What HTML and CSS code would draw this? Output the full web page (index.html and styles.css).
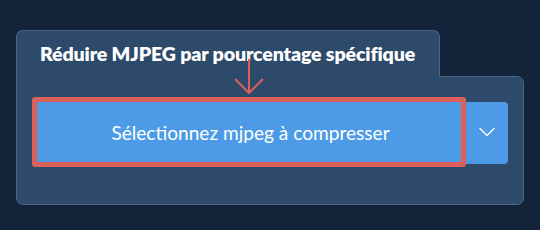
FILE: index.html
```html
<!DOCTYPE html>
<html lang="fr">
<head>
    <meta charset="UTF-8">
    <meta name="viewport" content="width=device-width, initial-scale=1.0">
    <title>Réduire MJPEG</title>
    <link rel="stylesheet" href="styles.css">
</head>
<body>
    <div class="compressor">
        <div class="compressor-tab">
            <h1 class="compressor-title">Réduire MJPEG par pourcentage spécifique</h1>
        </div>
        <div class="compressor-panel">
            <div class="file-picker">
                <button type="button" class="file-picker-main">Sélectionnez mjpeg à compresser</button>
                <button type="button" class="file-picker-toggle">
                    <svg width="18" height="10" viewBox="0 0 18 10">
                        <polyline points="1.5,1 9,8.5 16.5,1" fill="none" stroke="#fff" stroke-width="1.3" />
                    </svg>
                </button>
                <div class="highlight-box"></div>
                <svg class="highlight-arrow" width="32" height="38" viewBox="0 0 32 38">
                    <path d="M15 1 V35 M1 21 L15 35 L29 21" fill="none" stroke="#dc605a" stroke-width="2" />
                </svg>
            </div>
        </div>
    </div>
</body>
</html>
```

FILE: styles.css
```css
body {
    margin: 0;
    background-color: #12233a;
    font-family: 'Lato', 'Noto Sans', sans-serif;
    color: #fff;
}

.compressor {
    padding: 30px 0 0 16px;
}

.compressor-tab {
    position: relative;
    z-index: 1;
    width: 422px;
    height: 46px;
    margin-bottom: -1px;
    background-color: #2d4a6a;
    border: 1px solid #4c6687;
    border-bottom: none;
    border-radius: 7px 7px 0 0;
}

.compressor-title {
    margin: 0;
    padding: 11px 0 0 23px;
    font-size: 19.6px;
    font-weight: 800;
    line-height: 24px;
    letter-spacing: -0.15px;
}

.compressor-panel {
    width: 508px;
    height: 129px;
    box-sizing: border-box;
    padding: 25px 0 0 18px;
    background-color: #2d4a6a;
    border: 1px solid #4c6687;
    border-radius: 0 7px 7px 7px;
}

.file-picker {
    position: relative;
    display: flex;
    width: 473px;
    height: 62px;
}

.file-picker button {
    border: none;
    background-color: #4d9be6;
    color: #fff;
    font-family: inherit;
    cursor: pointer;
}

.file-picker-main {
    flex: 1;
    padding: 0 0 2px;
    font-size: 19.1px;
    font-weight: 400;
    border-radius: 4px 0 0 4px;
}

.file-picker-toggle {
    width: 42px;
    padding: 0 0 2px;
    border-radius: 0 4px 4px 0;
}

.highlight-box {
    position: absolute;
    left: -3px;
    top: -5px;
    width: 434px;
    height: 70px;
    box-sizing: border-box;
    border: 5px solid #dc605a;
    border-radius: 3px;
}

.highlight-arrow {
    position: absolute;
    z-index: 2;
    left: 199px;
    top: -44px;
}
```
